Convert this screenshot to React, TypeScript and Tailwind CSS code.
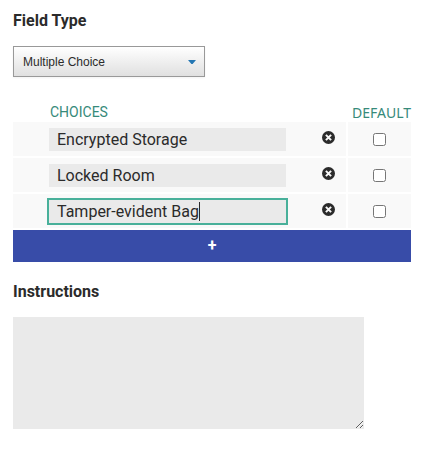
import { useState } from 'react'

type Choice = { id: number; label: string; isDefault: boolean }

const initialChoices: Choice[] = [
  { id: 1, label: 'Encrypted Storage', isDefault: false },
  { id: 2, label: 'Locked Room', isDefault: false },
  { id: 3, label: 'Tamper-evident Bag', isDefault: false },
]

function RemoveIcon() {
  return (
    <svg viewBox="0 0 13 13" className="block size-[13px]" aria-hidden="true">
      <circle cx="6.5" cy="6.5" r="6.5" fill="#2b2b2b" />
      <path d="M3.9 3.9l5.2 5.2M9.1 3.9L3.9 9.1" stroke="#f9f9f9" strokeWidth="2" />
    </svg>
  )
}

export default function App() {
  const [fieldType, setFieldType] = useState('Multiple Choice')
  const [choices, setChoices] = useState(initialChoices)
  const [focusedId, setFocusedId] = useState<number | null>(null)
  const [instructions, setInstructions] = useState('')

  const update = (id: number, patch: Partial<Choice>) => {
    setChoices(prev => prev.map(c => (c.id === id ? { ...c, ...patch } : c)))
  }

  const addChoice = () => {
    setChoices(prev => [...prev, { id: Date.now(), label: '', isDefault: false }])
  }

  return (
    <form
      onSubmit={e => e.preventDefault()}
      className="min-h-screen bg-white pt-[9px] pr-[21px] pl-[13px] font-[Roboto,sans-serif] text-base text-[#2b2b2b]"
    >
      <label htmlFor="field-type" className="block font-bold">Field Type</label>
      <div className="relative mt-[13px] w-48">
        <select
          id="field-type"
          value={fieldType}
          onChange={e => setFieldType(e.target.value)}
          className="block h-[31px] w-full appearance-none border border-[#999] bg-linear-to-b from-white to-[#e0e0e0] pr-6 pl-[9px] font-['Liberation_Sans',sans-serif] text-xs text-[#2b2b2b] shadow-xs"
        >
          <option>Multiple Choice</option>
          <option>Text</option>
          <option>Number</option>
          <option>Date</option>
        </select>
        <svg viewBox="0 0 8 4" className="pointer-events-none absolute top-[14px] right-[9px] h-1 w-2" aria-hidden="true">
          <path d="M0 0h8L4.6 4H3.4z" fill="#2477b3" />
        </svg>
      </div>

      <table className="mt-6 w-full border-separate border-spacing-0">
        <thead>
          <tr className="text-sm text-[#368a7a]">
            <th className="h-[21px] p-0 pt-[2px] pl-[37px] text-left leading-[19px] font-normal">CHOICES</th>
            <th className="w-[63px] p-0 pt-[2px] text-right font-['Noto_Sans',sans-serif] leading-[19px] font-normal">DEFAULT</th>
          </tr>
        </thead>
        <tbody>
          {choices.map(choice => (
            <tr key={choice.id}>
              <td className="h-9 border-r-2 border-b-2 border-white bg-[#f9f9f9] p-0 pr-[11px] pl-9">
                <div className="flex items-center justify-between">
                  <div className="relative">
                    <input
                      type="text"
                      aria-label="Choice"
                      autoFocus={choice.id === 3}
                      value={choice.label}
                      onFocus={() => setFocusedId(choice.id)}
                      onBlur={() => setFocusedId(null)}
                      onChange={e => update(choice.id, { label: e.target.value })}
                      className="block h-[23px] w-[237px] bg-[#eaeaea] px-2 pt-px caret-transparent outline-[#48b09a] focus:outline-2"
                    />
                    {/* solid caret that sits after the last character */}
                    {focusedId === choice.id && (
                      <div className="pointer-events-none absolute inset-0 flex items-center pl-2" aria-hidden="true">
                        <span className="invisible whitespace-pre">{choice.label}</span>
                        <span className="h-[19px] w-px bg-[#2b2b2b]" />
                      </div>
                    )}
                  </div>
                  <button
                    type="button"
                    aria-label="Remove choice"
                    onClick={() => setChoices(prev => prev.filter(c => c.id !== choice.id))}
                    className="pb-1"
                  >
                    <RemoveIcon />
                  </button>
                </div>
              </td>
              <td className="border-b-2 border-white bg-[#f9f9f9] p-0">
                <input
                  type="checkbox"
                  aria-label="Default"
                  checked={choice.isDefault}
                  onChange={e => update(choice.id, { isDefault: e.target.checked })}
                  className="mx-auto block size-[13px]"
                />
              </td>
            </tr>
          ))}
        </tbody>
      </table>
      <button
        type="button"
        aria-label="Add choice"
        onClick={addChoice}
        className="block h-8 w-full bg-[#384ca8] font-bold text-white"
      >
        +
      </button>

      <label htmlFor="instructions" className="mt-[18px] block font-bold">Instructions</label>
      <textarea
        id="instructions"
        value={instructions}
        onChange={e => setInstructions(e.target.value)}
        className="mt-[13px] block h-28 w-[351px] max-w-full resize bg-[#eaeaea] p-2"
      />
    </form>
  )
}
